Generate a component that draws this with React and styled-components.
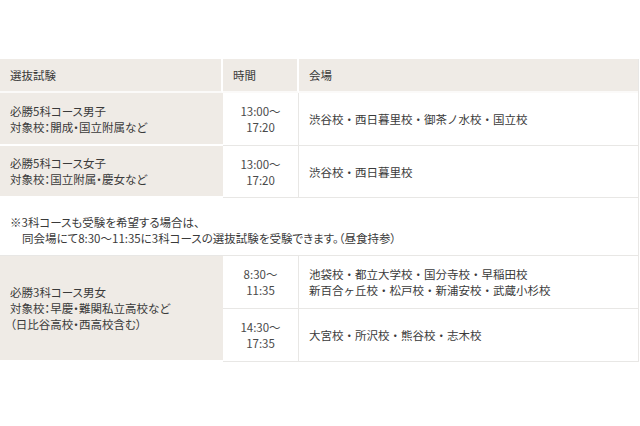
import styled, { createGlobalStyle } from "styled-components";

const GlobalStyle = createGlobalStyle`
  body {
    margin: 0;
    background: #fff;
  }
`;

const beige = "#efebe6";
const line = "#e8e7e5";

const exams = [
  {
    name: ["必勝5科コース男子", "対象校：開成・国立附属など"],
    height: 53,
    slots: [{ time: ["13:00〜", "17:20"], places: ["渋谷校・西日暮里校・御茶ノ水校・国立校"] }],
  },
  {
    name: ["必勝5科コース女子", "対象校：国立附属・慶女など"],
    height: 52,
    slots: [{ time: ["13:00〜", "17:20"], places: ["渋谷校・西日暮里校"] }],
  },
];

const group3 = {
  name: ["必勝3科コース男女", "対象校：早慶・難関私立高校など", "（日比谷高校・西高校含む）"],
  slots: [
    {
      time: ["8:30〜", "11:35"],
      places: ["池袋校・都立大学校・国分寺校・早稲田校", "新百合ヶ丘校・松戸校・新浦安校・武蔵小杉校"],
    },
    { time: ["14:30〜", "17:35"], places: ["大宮校・所沢校・熊谷校・志木校"] },
  ],
};

const Lines = ({ items }) => items.map((t, i) => <Line key={i}>{t}</Line>);

const App = () => {
  return (
    <Page>
      <GlobalStyle />
      <Table>
        <colgroup>
          <col style={{ width: 223 }} />
          <col style={{ width: 76 }} />
          <col />
        </colgroup>
        <thead>
          <Row $h={34}>
            <Head>選抜試験</Head>
            <Head>時間</Head>
            <Head>会場</Head>
          </Row>
        </thead>
        <tbody>
          {exams.map((e, i) => (
            <Row key={i} $h={e.height}>
              <NameCell><Lines items={e.name} /></NameCell>
              <TimeCell><Lines items={e.slots[0].time} /></TimeCell>
              <PlaceCell><Lines items={e.slots[0].places} /></PlaceCell>
            </Row>
          ))}
          <Row $h={58}>
            <NoteCell colSpan={3}>
              <Line>※3科コースも受験を希望する場合は、</Line>
              <Line $indent>同会場にて8:30〜11:35に3科コースの選抜試験を受験できます。（昼食持参）</Line>
            </NoteCell>
          </Row>
          {group3.slots.map((s, i) => (
            <Row key={i} $h={53}>
              {i === 0 && (
                <NameCell rowSpan={group3.slots.length}><Lines items={group3.name} /></NameCell>
              )}
              <TimeCell><Lines items={s.time} /></TimeCell>
              <PlaceCell><Lines items={s.places} /></PlaceCell>
            </Row>
          ))}
        </tbody>
      </Table>
    </Page>
  );
};

export default App;

const Page = styled.div`
  padding-top: 59px;
  width: 639px;
  font-family: "Noto Sans CJK JP", "Noto Sans", sans-serif;
  font-feature-settings: "palt";
  font-size: 11.5px;
  color: #3a3a3a;
`;

const Table = styled.table`
  width: 639px;
  table-layout: fixed;
  border-collapse: separate;
  border-spacing: 0;
  border-right: 1px solid ${line};
`;

const Row = styled.tr`
  height: ${(p) => p.$h}px;
`;

const Cell = styled.td`
  padding: 0 10px;
  vertical-align: middle;
  text-align: left;
  font-weight: normal;
  line-height: 16px;
  box-sizing: border-box;
`;

const Head = styled(Cell).attrs({ as: "th" })`
  background: ${beige};
  border-right: 2px solid #fff;
  border-bottom: 2px solid #fbfaf9;
  &:last-child {
    border-right: none;
  }
`;

const NameCell = styled(Cell)`
  background: ${beige};
  border-bottom: 2px solid #fff;
`;

const TimeCell = styled(Cell)`
  padding: 0;
  text-align: center;
  color: #4a4a4a;
  border-right: 1px solid ${line};
  border-bottom: 1px solid ${line};
`;

const PlaceCell = styled(Cell)`
  font-feature-settings: normal;
  border-bottom: 1px solid ${line};
`;

const NoteCell = styled(Cell)`
  background: #fff;
  padding-top: 6px;
  border-bottom: 1px solid ${line};
`;

const Line = styled.div`
  white-space: nowrap;
  padding-left: ${(p) => (p.$indent ? "12px" : "0")};
`;
